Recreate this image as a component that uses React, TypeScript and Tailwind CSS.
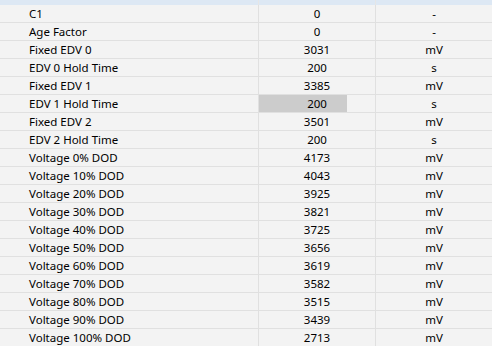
type Row = {
  name: string;
  value: string;
  unit: string;
  selected?: boolean;
};

const rows: Row[] = [
  { name: "C1", value: "0", unit: "-" },
  { name: "Age Factor", value: "0", unit: "-" },
  { name: "Fixed EDV 0", value: "3031", unit: "mV" },
  { name: "EDV 0 Hold Time", value: "200", unit: "s" },
  { name: "Fixed EDV 1", value: "3385", unit: "mV" },
  { name: "EDV 1 Hold Time", value: "200", unit: "s", selected: true },
  { name: "Fixed EDV 2", value: "3501", unit: "mV" },
  { name: "EDV 2 Hold Time", value: "200", unit: "s" },
  { name: "Voltage 0% DOD", value: "4173", unit: "mV" },
  { name: "Voltage 10% DOD", value: "4043", unit: "mV" },
  { name: "Voltage 20% DOD", value: "3925", unit: "mV" },
  { name: "Voltage 30% DOD", value: "3821", unit: "mV" },
  { name: "Voltage 40% DOD", value: "3725", unit: "mV" },
  { name: "Voltage 50% DOD", value: "3656", unit: "mV" },
  { name: "Voltage 60% DOD", value: "3619", unit: "mV" },
  { name: "Voltage 70% DOD", value: "3582", unit: "mV" },
  { name: "Voltage 80% DOD", value: "3515", unit: "mV" },
  { name: "Voltage 90% DOD", value: "3439", unit: "mV" },
  { name: "Voltage 100% DOD", value: "2713", unit: "mV" },
];

export default function App() {
  return (
    <div
      className="w-[492px] h-[346px] overflow-hidden bg-[#f3f3f3] text-[11.5px] text-[#000000]"
      style={{ fontFamily: '"Noto Sans", "Open Sans", sans-serif' }}
    >
      {/* header strip of the grid */}
      <div className="h-[5px] bg-[#dde8f4] flex">
        <div className="w-[258px]" />
        <div className="w-px bg-[#e6e6e6]" />
        <div className="w-[116px]" />
        <div className="w-px bg-[#e6e6e6]" />
      </div>

      {rows.map((row) => (
        <div
          key={row.name}
          className="flex h-[18px] border-b border-[#e0e0e0] leading-[17px]"
        >
          <div className="w-[258px] pl-[29px] whitespace-nowrap">{row.name}</div>
          <div className="w-px bg-[#e0e0e0]" />
          <div className="relative w-[116px] text-center">
            {/* in-place editor box of the selected cell */}
            {row.selected && (
              <div className="absolute left-0 top-0 bottom-0 w-[88px] bg-[#cccccc]" />
            )}
            <span className="relative">{row.value}</span>
          </div>
          <div className="w-px bg-[#e0e0e0]" />
          <div className="flex-1 text-center">{row.unit}</div>
        </div>
      ))}
    </div>
  );
}
